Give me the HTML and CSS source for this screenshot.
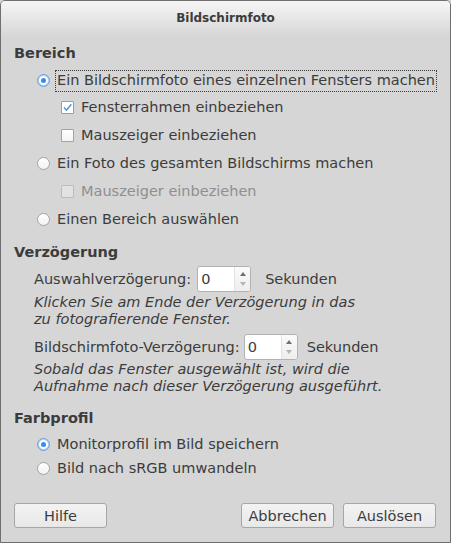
FILE: index.html
```html
<!DOCTYPE html>
<html lang="de">
<head>
<meta charset="utf-8">
<title>Bildschirmfoto</title>
<link rel="stylesheet" href="styles.css">
</head>
<body>
<div class="window">
  <div class="titlebar">Bildschirmfoto</div>
  <div class="content">
    <div class="heading h-area">Bereich</div>
    <div class="row radio-row r1">
      <span class="radio checked"></span>
      <span class="label focus">Ein Bildschirmfoto eines einzelnen Fensters machen</span>
    </div>
    <div class="row check-row">
      <span class="check checked"><svg viewBox="0 0 13 13" width="13" height="13"><path d="M3 6.5 L5.5 9.2 L10.3 3.3" fill="none" stroke="#4a90d9" stroke-width="1.4"/></svg></span>
      <span class="label">Fensterrahmen einbeziehen</span>
    </div>
    <div class="row check-row">
      <span class="check"></span>
      <span class="label">Mauszeiger einbeziehen</span>
    </div>
    <div class="row radio-row">
      <span class="radio"></span>
      <span class="label">Ein Foto des gesamten Bildschirms machen</span>
    </div>
    <div class="row check-row disabled">
      <span class="check"></span>
      <span class="label">Mauszeiger einbeziehen</span>
    </div>
    <div class="row radio-row">
      <span class="radio"></span>
      <span class="label">Einen Bereich auswählen</span>
    </div>

    <div class="heading h-delay">Verzögerung</div>
    <div class="delay-row d1">
      <span class="label">Auswahlverzögerung:</span>
      <span class="spin">
        <span class="spin-value">0</span>
        <span class="spin-btns">
          <svg viewBox="0 0 8 20" width="8" height="20"><path d="M1 7 L4 3 L7 7 Z" fill="#6e6e6e"/><path d="M1 13 L4 17 L7 13 Z" fill="#b4b4b4"/></svg>
        </span>
      </span>
      <span class="label unit">Sekunden</span>
    </div>
    <div class="hint hint1">Klicken Sie am Ende der Verzögerung in das<br>zu fotografierende Fenster.</div>
    <div class="delay-row d2">
      <span class="label">Bildschirmfoto-Verzögerung:</span>
      <span class="spin">
        <span class="spin-value">0</span>
        <span class="spin-btns">
          <svg viewBox="0 0 8 20" width="8" height="20"><path d="M1 7 L4 3 L7 7 Z" fill="#6e6e6e"/><path d="M1 13 L4 17 L7 13 Z" fill="#b4b4b4"/></svg>
        </span>
      </span>
      <span class="label unit">Sekunden</span>
    </div>
    <div class="hint hint2">Sobald das Fenster ausgewählt ist, wird die<br>Aufnahme nach dieser Verzögerung ausgeführt.</div>

    <div class="heading h-color">Farbprofil</div>
    <div class="row radio-row small">
      <span class="radio checked"></span>
      <span class="label">Monitorprofil im Bild speichern</span>
    </div>
    <div class="row radio-row small">
      <span class="radio"></span>
      <span class="label">Bild nach sRGB umwandeln</span>
    </div>

    <div class="buttons">
      <button class="btn">Hilfe</button>
      <span class="spacer"></span>
      <button class="btn">Abbrechen</button>
      <button class="btn">Auslösen</button>
    </div>
  </div>
</div>
</body>
</html>
```
FILE: styles.css
```css
html, body {
  margin: 0;
  padding: 0;
  background: #d6d6d6;
}
body {
  font-family: "DejaVu Sans", sans-serif;
  font-size: 14.5px;
  color: #3c3c3c;
}
.window {
  width: 451px;
  height: 543px;
  box-sizing: border-box;
  border: 1px solid #6f6f6f;
  border-radius: 5px 5px 0 0;
  background: #d6d6d6;
  display: flex;
  flex-direction: column;
  overflow: hidden;
}
.titlebar {
  height: 36px;
  flex: none;
  display: flex;
  align-items: center;
  justify-content: center;
  font-weight: bold;
  font-size: 12px;
  color: #3c3c3c;
  background: linear-gradient(#f6f6f6, #e9e9e9 40%, #d6d6d6);
  padding-bottom: 3px;
  box-sizing: border-box;
}
.content {
  flex: 1;
  display: flex;
  flex-direction: column;
  padding: 8px 14px 14px 13px;
}
.heading {
  font-weight: bold;
  line-height: 17px;
  height: 17px;
}
.row {
  display: flex;
  align-items: center;
  height: 28px;
  line-height: 17px;
}
.r1 {
  height: 25px;
  margin-top: 6px;
}
.radio-row {
  padding-left: 23px;
}
.check-row {
  padding-left: 47px;
}
.radio {
  width: 13px;
  height: 13px;
  box-sizing: border-box;
  border: 1px solid #a3a3a3;
  border-radius: 50%;
  background: linear-gradient(#ffffff, #f2f2f2);
  flex: none;
  margin-right: 7px;
  position: relative;
}
.radio.checked {
  border-color: #5e9de6;
  background: #fff;
  box-shadow: inset 0 0 0 1px #a9cbf2;
}
.radio.checked::after {
  content: "";
  position: absolute;
  left: 3px;
  top: 3px;
  width: 5px;
  height: 5px;
  border-radius: 50%;
  background: #3d8ae8;
}
.check {
  width: 13px;
  height: 13px;
  box-sizing: border-box;
  border: 1px solid #a3a3a3;
  border-radius: 1px;
  background: linear-gradient(#ffffff, #f4f4f4);
  flex: none;
  margin-right: 7px;
  position: relative;
}
.check svg {
  position: absolute;
  left: -1px;
  top: -1px;
}
.check.checked {
  border-color: #6ea6e8;
  background: #fff;
}
.disabled .label {
  color: #8f8f8f;
}
.disabled .check {
  border-color: #bcbcbc;
  background: #e2e2e2;
}
.focus {
  outline: 1px dotted #3c3c3c;
  outline-offset: 1px;
  padding: 0 0 1px 0;
}
.h-delay {
  margin-top: 11px;
}
.delay-row {
  display: flex;
  align-items: center;
  height: 26px;
  padding-left: 20px;
}
.d1 {
  margin-top: 5px;
}
.d2 {
  margin-top: 6px;
}
.spin {
  display: flex;
  height: 26px;
  box-sizing: border-box;
  border: 1px solid #b2b2b2;
  border-radius: 3px;
  background: #fff;
  margin-left: 6px;
  overflow: hidden;
}
.d2 .spin {
  margin-left: 4px;
}
.spin-value {
  width: 36px;
  padding-left: 3px;
  display: flex;
  align-items: center;
  box-sizing: border-box;
}
.spin-btns {
  width: 15px;
  border-left: 1px solid #e2e2e2;
  background: linear-gradient(#fafafa, #eeeeee);
  display: flex;
  align-items: center;
  justify-content: center;
}
.unit {
  margin-left: 14px;
}
.d2 .unit {
  margin-left: 9px;
}
.hint {
  font-style: italic;
  line-height: 17px;
  padding-left: 20px;
}
.hint1 {
  margin-top: 2px;
}
.hint2 {
  margin-top: 1px;
}
.h-color {
  margin-top: 15px;
}
.small {
  height: 24px;
}
.h-color + .small {
  margin-top: 5px;
}
.buttons {
  margin-top: auto;
  display: flex;
  gap: 9px;
}
.spacer {
  flex: 1;
}
.btn {
  width: 93px;
  height: 25px;
  font-family: "DejaVu Sans", sans-serif;
  font-size: 14.5px;
  color: #3c3c3c;
  border: 1px solid #a6a6a6;
  border-radius: 3px;
  background: linear-gradient(#f3f3f3, #e8e8e8);
  padding: 0;
}
```
